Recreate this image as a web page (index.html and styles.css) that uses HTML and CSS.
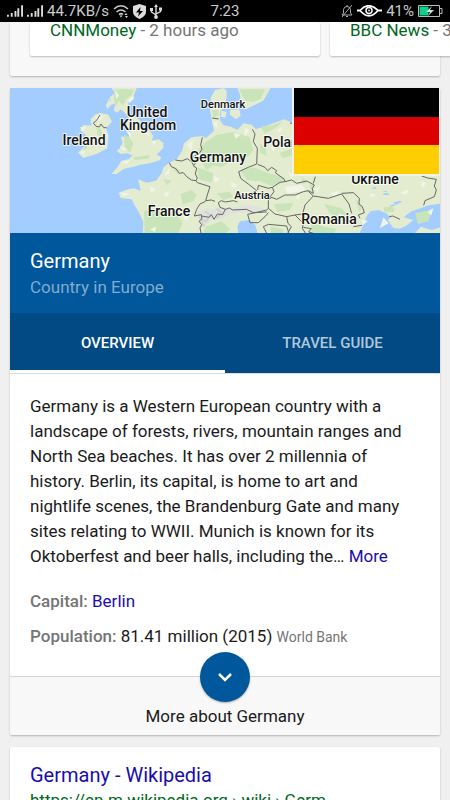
FILE: index.html
```html
<!DOCTYPE html>
<html lang="en">
<head>
<meta charset="utf-8">
<meta name="viewport" content="width=device-width, initial-scale=1">
<title>Germany</title>
<link rel="stylesheet" href="styles.css">
</head>
<body>
<header class="status">
  <div class="status-group">
    <svg class="signal" viewBox="0 0 17 12" aria-hidden="true"><path d="M0 10h2v2H0zM4 8h2v4H4zM8 6h2v6H8zM11 3h2v9h-2zM15 0h2v12h-2z"/></svg>
    <svg class="signal" viewBox="0 0 17 12" aria-hidden="true"><path d="M0 10h2v2H0zM4 8h2v4H4zM8 6h2v6H8zM11 3h2v9h-2zM15 0h2v12h-2z"/></svg>
    <span>44.7KB/s</span>
    <svg class="wifi" viewBox="0 0 16 14" aria-hidden="true"><path d="M1 5q7-6.500 14 0M3.500 8q4.500-4 9 0M6 10.500q2-1.800 4 0" fill="none" stroke="#ccc" stroke-width="1.500"/><path d="M6.500 11.500h3L8 13.500zM11.500 11l1.500-2 1.500 2zM12 12h3l-1.500 2z"/></svg>
    <svg class="shield" viewBox="0 0 13 15" aria-hidden="true"><path d="M6.500 0 13 2v6q0 4-6.500 7Q0 12 0 8V2z"/><path d="M7.500 3 3 8.500h3L5 12.500 10 7H7z" fill="#000"/></svg>
    <svg class="usb" viewBox="0 0 12 15" aria-hidden="true"><path d="M6 2v11M1.500 5v3L6 11M10.500 4.500V7.500L6 10" fill="none" stroke="#ddd" stroke-width="1.400"/><path d="M6 0 8 3H4zM0 4h3v3H0zM9 3.500h3v3H9z"/><circle cx="6" cy="13" r="1.900"/></svg>
  </div>
  <time>7:23</time>
  <div class="status-group status-right">
    <svg class="bell" viewBox="0 0 12 14" aria-hidden="true"><path d="M1 11h10L9.500 9V5.500Q9 2.500 6 2.500T2.500 5.500V9zM5 12.500h2M6 1v1.500M1 13 11 1" fill="none" stroke="#aaa"/></svg>
    <svg class="eye" viewBox="0 0 25 12" aria-hidden="true"><path d="M0 5.500h3Q11.500-4 21 5.500h4M3 5.500Q12 16 21 5.500" fill="none" stroke="#fff" stroke-width="1.800"/><circle cx="12" cy="5.500" r="3" fill="none" stroke="#fff" stroke-width="1.500"/><circle cx="12" cy="5.500" r="1"/></svg>
    <span>41%</span>
    <svg class="battery" viewBox="0 0 25 12" aria-hidden="true"><path d="M.5.500h21v11H.5zM22 3.500h2v5h-2" fill="none" stroke="#bbb"/><path d="M1.500 1.500h9v9h-9z" fill="#0fd08b"/><path d="m14 1-6 6h4l-2 4 6-6h-4z"/></svg>
  </div>
</header>
<main class="page">
  <section class="card news">
    <article class="story"><span class="source">CNNMoney</span> - 2 hours ago</article>
    <article class="story"><span class="source">BBC News</span> - 3 hours ago</article>
  </section>

  <section class="card panel">
    <div class="hero">
      <svg class="map" viewBox="0 0 430 145" preserveAspectRatio="xMidYMid slice" role="img" aria-label="Map of Europe">
        <g transform="translate(-10 -8) scale(.33333)">
          <g fill="#e4ecd0">
            <path d="M335 24L345 40 330 50 332 62 318 72 322 88 332 76 345 70 342 92 352 98 362 88 372 96 385 110 380 140 392 158 385 172 362 170 368 188 358 206 350 212 362 222 380 220 398 226 385 238 364 242 352 262 334 282 350 282 372 266 402 260 420 254 450 250 480 240 484 232 470 224 490 204 490 188 475 178 455 182 460 168 450 152 430 148 420 120 385 100 385 66 400 50 410 24Z"/>
            <path d="M285 104L300 98 325 104 336 125 318 145 326 165 322 205 290 222 250 234 234 218 252 200 243 180 258 166 240 150 250 135 275 137 272 118Z"/>
            <path d="M428 465L430 425 418 400 405 378 395 358 362 354 356 338 385 328 402 325 422 332 414 298 440 308 468 302 485 280 490 262 508 248 530 238 546 214 552 190 575 172 607 168 618 174 642 152 636 125 630 90 632 55 645 30 672 24 680 32 680 54 672 80 660 96 660 120 670 136 694 140 712 150 730 130 755 134 768 148 820 130 852 118 880 130H1330V370L1286 376 1264 384 1235 394 1220 404 1212 412 1240 420 1218 438 1198 446 1180 444 1164 420 1172 412 1158 400 1136 390 1112 394 1100 408 1092 430 1076 465H775L766 436 748 420 720 424 712 440 716 465Z"/>
            <path d="M712 24H812L790 62 762 76 738 88 722 66 720 44ZM690 90L718 88 722 108 708 118 690 104ZM664 92L680 96 676 114 662 110ZM328 52L318 80 330 70Z"/>
            <path d="M1240 465L1262 440 1295 450 1330 440V465Z"/>
          </g>
          <g fill="#c9e4b9">
            <path d="M342 30L370 26 402 30 396 44 378 58 370 76 356 62 348 80 342 60ZM718 28H796L782 56 760 66 735 62ZM636 92L655 88 656 106 640 112ZM612 190L650 165 700 156 748 170 760 210 745 230 700 238 665 262 640 256 620 270 600 240 585 222ZM542 342L575 330 590 344 580 364 548 372ZM432 392L480 384 530 400 548 430 534 460H434ZM616 440L665 424 690 448 675 460H610ZM372 165L385 170 400 188 390 218 374 200ZM400 232L450 225 446 236 404 240ZM290 142L306 150 304 172 292 164ZM254 184L264 180 262 205 250 212Z"/>
            <path d="M650 340L690 336 700 350 670 360ZM722 272L760 262 800 278 855 292 848 304 815 318 780 304 740 300ZM750 340L798 338 800 352 765 362ZM822 372L880 368 870 390 832 396ZM930 310L942 320 932 335ZM972 372L1024 384 1056 420 1040 432 990 400ZM1066 354L1086 380 1078 398ZM905 292L925 306 908 312ZM1150 382L1180 380 1182 395 1154 398ZM812 440L850 448V465H812ZM1245 398L1298 390 1284 424 1254 432ZM930 420L970 440 1010 446 1000 460H938ZM782 140L820 134 850 124 830 142 794 162ZM780 190L796 204 800 228 780 218ZM838 218L880 205 880 226 848 234ZM515 265L540 270 535 284ZM592 262L640 280 636 308 596 298ZM490 296L515 302 500 316Z"/>
          </g>
          <g fill="#f1f4e8">
            <path d="M345 30L357 46 349 58ZM384 60L400 46 402 56 388 70ZM285 112L299 104 311 110 297 124ZM306 182L318 190 310 202ZM240 216L256 210 250 226ZM240 142L258 140 250 154ZM376 148L394 160 390 172ZM360 198L380 206 370 212ZM366 246L390 240 380 252ZM455 184L468 184 462 196ZM438 158L448 160 444 172ZM362 338L386 340 372 350ZM450 320L468 326 454 338ZM490 342L510 332 500 352ZM494 282L510 262 506 286ZM560 195L578 180 576 212ZM586 222L602 214 598 238ZM640 288L660 296 646 308ZM690 308L714 314 700 326ZM640 128L652 124 650 148ZM700 158L722 164 708 176ZM734 142L748 150 734 172ZM855 322L905 314 918 330 862 342ZM745 376L764 382 750 390ZM786 394L800 400 788 408ZM888 350L902 344 894 360ZM945 326L960 318 952 338ZM990 340L1022 332 1004 350ZM1016 400L1036 408 1018 410ZM1084 420L1104 422 1090 434ZM1150 412L1166 430 1140 444ZM1200 340L1226 328 1220 344ZM1262 304L1278 310 1268 324ZM832 150L846 142 840 160ZM810 202L832 196 820 214ZM1282 396L1300 384 1294 406ZM1110 340L1130 346 1112 352ZM864 276L880 284 876 298ZM450 448L470 440 464 456ZM548 412L566 400 562 424Z"/>
          </g>
          <path d="M588 400L620 384 645 388 668 382 690 384 740 374 780 380 800 392 770 400 720 398 690 404 660 418 636 420 612 440 600 430 598 412Z" fill="#e0e2dc"/>
          <path d="M615 395L630 404 618 424 602 416 612 440M650 385L665 400 650 414" fill="none" stroke="#d0d2cd" stroke-width="6"/>
          <g fill="#a3ccff">
            <path d="M1176 368L1200 362 1206 366 1194 371ZM1168 378L1196 366V371L1172 380ZM1150 340H1166V345H1150ZM1118 322H1128V326H1118ZM1146 334L1160 332V336Z"/>
          </g>
          <g fill="none" stroke="#666" stroke-width="3" stroke-linejoin="round">
            <path d="M300 105L290 121 280 129 288 139 298 141 303 132 311 143H320"/>
            <path d="M607 172L602 195 606 208 598 220 580 230 576 240 586 250 580 258 590 264 586 282 592 294 588 302"/>
            <path d="M508 248L514 260 528 266 538 280 550 278 560 290 574 300 588 302 592 308 630 320 622 345 617 362 634 360 645 364"/>
            <path d="M526 240L545 243 562 236 575 245 580 255M637 114L656 117"/>
            <path d="M617 364L600 372 590 388 583 408 604 404 606 416 597 424 605 434 600 444 604 462M604 408L628 412 634 404 642 418 652 402 668 404 676 388 688 384 698 390 740 388 760 398 800 396M655 368L664 362 676 366 700 362 712 366M655 368L660 382 676 388"/>
            <path d="M757 148L765 162 760 185 772 205 770 252 745 262 716 275 722 295 745 312 770 332 740 346 706 352"/>
            <path d="M773 253L795 262 803 272 815 262 830 272 826 278 853 298 855 305 840 307 817 322 805 325 775 316 773 330"/>
            <path d="M855 305L875 300 890 310 920 303 943 315 937 325 940 340 925 332 910 335 885 345 855 345 830 358 815 352 805 358 822 335 817 322M940 310L946 290"/>
            <path d="M815 352L805 362 805 385 825 402 860 410 885 405 908 402 915 375 940 348 925 334M940 348L985 355 1025 342 1047 372 1055 400M1025 340L1060 338 1078 355 1077 372 1087 380 1093 398 1075 405 1080 415"/>
            <path d="M743 403L775 396 800 390 805 385M743 403L750 428 775 428 795 410 805 398M790 440L805 433 860 438 866 458M790 440L800 460M860 410L864 430 874 440 862 462M885 405L900 420 910 430 907 445 918 462M908 402L914 412"/>
            <path d="M1265 288L1283 294 1309 298 1303 318 1309 330 1303 350 1275 362 1271 376M1168 410L1178 408 1200 418M1060 440L1086 436M870 130L880 128M910 442L934 446 926 456 940 460"/>
          </g>
        </g>
        <g class="map-labels">
          <text x="137" y="29">United</text>
          <text x="138" y="42">Kingdom</text>
          <text x="74" y="57">Ireland</text>
          <text class="minor" x="213" y="20">Denmark</text>
          <text x="208" y="74">Germany</text>
          <text x="275" y="59">Poland</text>
          <text class="minor" x="242" y="111">Austria</text>
          <text x="159" y="128">France</text>
          <text x="319" y="136">Romania</text>
          <text x="365" y="96">Ukraine</text>
        </g>
      </svg>
      <div class="flag" role="img" aria-label="Flag of Germany"></div>
    </div>
    <div class="heading">
      <h1>Germany</h1>
      <p>Country in Europe</p>
    </div>
    <nav class="tabs">
      <button class="tab active" type="button">OVERVIEW</button>
      <button class="tab" type="button">TRAVEL GUIDE</button>
    </nav>
    <div class="details">
      <p>Germany is a Western European country with a landscape of forests, rivers, mountain ranges and North Sea beaches. It has over 2 millennia of history. Berlin, its capital, is home to art and nightlife scenes, the Brandenburg Gate and many sites relating to WWII. Munich is known for its Oktoberfest and beer halls, including the… <a href="#">More</a></p>
      <p><span class="label">Capital:</span> <a href="#">Berlin</a></p>
      <p><span class="label">Population:</span> 81.41 million (2015) <small>World Bank</small></p>
    </div>
    <button class="more" type="button">
      <span class="chevron"><svg viewBox="0 0 16 10" aria-hidden="true"><path d="M2 2l6 6 6-6" fill="none" stroke="#fff" stroke-width="2.500"/></svg></span>
      More about Germany
    </button>
  </section>

  <section class="card result">
    <h2><a href="#">Germany - Wikipedia</a></h2>
    <cite>https://en.m.wikipedia.org › wiki › Germ...</cite>
  </section>
</main>
</body>
</html>
```
FILE: styles.css
```css
* {
  box-sizing: border-box;
}

body {
  display: flex;
  flex-direction: column;
  height: 100vh;
  margin: 0;
  overflow: hidden;
  background: #f0f0f0;
  color: #1a1a1a;
  font: 17px/25px Roboto, sans-serif;
}

h1, h2, p {
  margin: 0;
  font-weight: 400;
}

a {
  color: #1a0dab;
  text-decoration: none;
}

button {
  border: 0;
  color: inherit;
  font: inherit;
}

.status {
  flex: none;
  display: grid;
  grid-template-columns: 1fr auto 1fr;
  align-items: center;
  height: 22px;
  padding: 0 7px;
  background: #000;
  color: #ccc;
  font-size: 15px;
  line-height: 22px;
}

.status svg {
  flex: none;
  fill: #ddd;
}

.status-group {
  display: flex;
  align-items: center;
  gap: 4px;
}

.status-right {
  justify-content: flex-end;
}

.signal { width: 16px; height: 12px; }
.wifi { width: 16px; height: 14px; }
.shield { width: 13px; height: 15px; }
.usb { width: 12px; height: 15px; }
.bell { width: 12px; height: 14px; }
.eye { width: 25px; height: 12px; }
.battery { width: 25px; height: 12px; }

.page {
  flex: 1;
  display: flex;
  flex-direction: column;
  gap: 12px;
  min-height: 0;
  padding: 0 10px;
  overflow: hidden;
}

.card {
  flex: none;
  border-radius: 2px;
  background: #fff;
  box-shadow: 0 1px 2px rgba(0, 0, 0, 0.25);
}

.news {
  display: flex;
  gap: 10px;
  padding: 0 0 20px 20px;
  background: #f8f8f8;
}

.story {
  flex: none;
  width: 290px;
  padding: 0 20px 18px;
  border-radius: 2px;
  background: #fff;
  box-shadow: 0 1px 2px rgba(0, 0, 0, 0.25);
  color: #757575;
  line-height: 16px;
  white-space: nowrap;
}

.source {
  color: #006621;
}

.hero {
  position: relative;
  height: 145px;
  background: #a3ccff;
}

.map {
  display: block;
  width: 100%;
  height: 100%;
}

.map-labels {
  fill: #111;
  font-size: 14px;
  font-weight: 500;
  paint-order: stroke;
  stroke: rgba(255, 255, 255, 0.8);
  stroke-linejoin: round;
  stroke-width: 2px;
  text-anchor: middle;
}

.map-labels .minor {
  font-size: 11px;
}

.flag {
  position: absolute;
  top: 0;
  right: 0;
  width: 148px;
  height: 88px;
  border: solid #f2f2e8;
  border-width: 0 1px 2px 2px;
  background: linear-gradient(#000 33.3%, #d00 33.3% 66.6%, #ffce00 66.6%);
}

.heading {
  padding: 15px 20px 13px;
  background: #01579b;
  color: #fff;
}

.heading h1 {
  margin-bottom: 1px;
  font-size: 20px;
  line-height: 26px;
}

.heading p {
  color: #80abcd;
}

.tabs {
  display: grid;
  grid-template-columns: 1fr 1fr;
  background: #014a84;
}

.tab {
  height: 60px;
  padding: 3px 0 0;
  border-bottom: 3px solid transparent;
  background: none;
  color: #b2c8da;
  font-size: 15px;
  font-weight: 500;
}

.tab.active {
  border-color: #fff;
  color: #fff;
}

.details {
  display: flex;
  flex-direction: column;
  gap: 10px;
  padding: 20px 20px 26px;
  border-top: 1px solid #ddd;
}

.details p:first-child {
  margin-bottom: 10px;
}

.label {
  color: #757575;
  font-weight: 500;
}

small {
  color: #757575;
  font-size: 14px;
}

.more {
  position: relative;
  display: block;
  width: 100%;
  padding: 27px 20px 6px;
  border-top: 1px solid #d6d6d6;
  border-radius: 0 0 2px 2px;
  background: #f8f8f8;
}

.chevron {
  position: absolute;
  top: -25px;
  left: 50%;
  display: grid;
  place-items: center;
  width: 50px;
  height: 50px;
  margin-left: -25px;
  border-radius: 50%;
  background: #01579b;
  box-shadow: 0 1px 2px rgba(0, 0, 0, 0.3);
}

.chevron svg {
  width: 16px;
  height: 10px;
}

.result {
  padding: 15px 20px;
}

.result h2 {
  font-size: 20px;
  line-height: 26px;
}

cite {
  color: #006621;
  font-style: normal;
}
```
